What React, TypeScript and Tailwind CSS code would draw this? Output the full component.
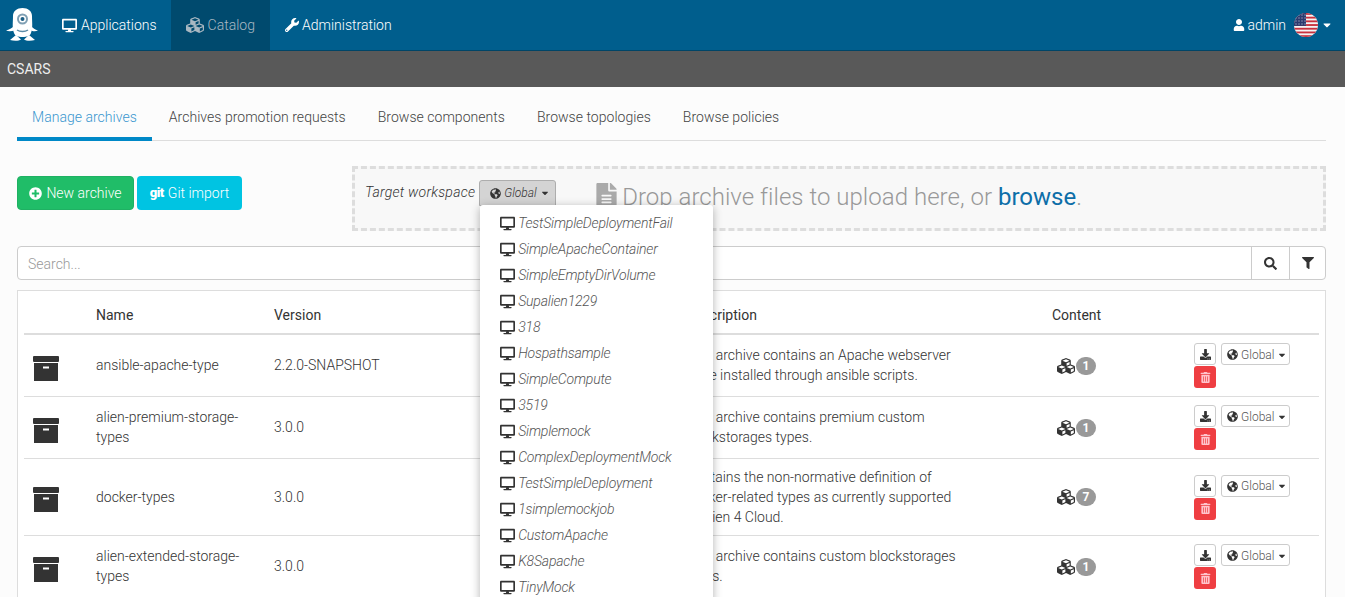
import { FaCaretDown, FaCubes, FaDesktop, FaDownload, FaFileAlt, FaFilter, FaGlobeAmericas, FaPlusCircle, FaSearch, FaTrashAlt, FaUser, FaWrench } from 'react-icons/fa';

const WORKSPACES = [
  'TestSimpleDeploymentFail',
  'SimpleApacheContainer',
  'SimpleEmptyDirVolume',
  'Supalien1229',
  '318',
  'Hospathsample',
  'SimpleCompute',
  '3519',
  'Simplemock',
  'ComplexDeploymentMock',
  'TestSimpleDeployment',
  '1simplemockjob',
  'CustomApache',
  'K8Sapache',
  'TinyMock',
];

const ARCHIVES = [
  {
    name: 'ansible-apache-type',
    version: '2.2.0-SNAPSHOT',
    description: ['This archive contains an Apache webserver', 'to be installed through ansible scripts.'],
    count: 1,
  },
  {
    name: 'alien-premium-storage-types',
    version: '3.0.0',
    description: ['This archive contains premium custom', 'blockstorages types.'],
    count: 1,
  },
  {
    name: 'docker-types',
    version: '3.0.0',
    description: ['Contains the non-normative definition of', 'docker-related types as currently supported', 'in Alien 4 Cloud.'],
    count: 7,
  },
  {
    name: 'alien-extended-storage-types',
    version: '3.0.0',
    description: ['This archive contains custom blockstorages', 'types.'],
    count: 1,
  },
];

const TABS = ['Manage archives', 'Archives promotion requests', 'Browse components', 'Browse topologies', 'Browse policies'];

function Logo() {
  return (
    <svg width="34" height="40" viewBox="0 0 34 40" className="block">
      <g fill="#fff">
        <path d="M8 11c0-5 4-8 9.500-8S27 6 27 11c0 6 1 12-1 17-1 3-4 4-8.500 4S10 31 9 28c-2-5-1-11-1-17z" />
        <path d="M9 21c-2 2-5 4-8 4.500 3 1.200 6 .8 9-.5zM26 21c2 2 4 4 7 4.500-3 1.200-5 .8-8-.5z" />
        <path d="M11 30l-6 5c4 1.200 9 1 11-.5zM24 30l6 5c-4 1.200-9 1-11-.5z" />
      </g>
      <circle cx="17.500" cy="14" r="5.500" fill="#7f9fb3" />
      <circle cx="17.500" cy="14" r="3.500" fill="#fff" />
      <circle cx="17.500" cy="14" r="2" fill="#1d5f86" />
      <path d="M12 25c3 2 8 2 11 0" stroke="#5a8aa6" strokeWidth="1.500" fill="none" />
    </svg>
  );
}

function Flag() {
  const stripes = [0, 2, 4, 6, 8, 10, 12];
  return (
    <svg width="24" height="24" viewBox="0 0 24 24" className="block">
      <defs>
        <clipPath id="flag-circle">
          <circle cx="12" cy="12" r="12" />
        </clipPath>
      </defs>
      <g clipPath="url(#flag-circle)">
        <rect width="24" height="24" fill="#f4f4f4" />
        {stripes.map((s) => (
          <rect key={s} y={s * 1.85} width="24" height="1.850" fill="#c8313e" />
        ))}
        <rect width="12" height="12.900" fill="#2b3a6e" />
        {[2, 5, 8, 11].map((y) =>
          [2, 5, 8, 11].map((x) => <rect key={`${x}-${y}`} x={x - 0.5} y={y - 0.5} width="1" height="1" fill="#cfd3e2" />),
        )}
      </g>
    </svg>
  );
}

function ArchiveIcon() {
  return (
    <svg width="26" height="25" viewBox="0 0 26 25" className="block">
      <rect x="0" y="0" width="26" height="6" rx="1" fill="#333" />
      <rect x="1" y="7" width="24" height="18" fill="#333" />
      <rect x="10" y="10.500" width="6" height="2" fill="#fff" />
    </svg>
  );
}

function NavItem({ icon, label, active, className = '' }: { icon: React.ReactNode; label: string; active?: boolean; className?: string }) {
  return (
    <a className={`flex h-[50px] items-center gap-[4px] px-[15px] ${active ? 'bg-[#004a6e] text-[#a9b8c2]' : 'text-white'} ${className}`}>
      {icon}
      {label}
    </a>
  );
}

export default function App() {
  return (
    <div className="h-screen overflow-hidden bg-[#fcfcfc] font-['Roboto',sans-serif] text-[14px] leading-[20px] text-[#333]">
      <header className="flex h-[51px] items-center border-b border-[#004567] bg-[#005e8d] pr-[12px] font-light">
        <div className="ml-[5px] mr-[2px] w-[40px]">
          <Logo />
        </div>
        <NavItem className="mr-[-1px]" icon={<FaDesktop className="text-[15px]" />} label="Applications" />
        <NavItem active icon={<FaCubes className="text-[18px]" />} label="Catalog" />
        <NavItem icon={<FaWrench className="mr-[-1px] text-[14px]" />} label="Administration" />
        <div className="ml-auto flex items-center text-white">
          <FaUser className="mr-[2px] text-[12px]" />
          <span className="mr-[8px]">admin</span>
          <Flag />
          <FaCaretDown className="ml-[3px] text-[12px]" />
        </div>
      </header>

      <div className="flex h-[36px] items-center bg-[#595959] pl-[7px] text-[#eee]">CSARS</div>

      <main className="pl-[17px] pr-[19px] pt-[10px]">
        <nav className="flex h-[44px] gap-[2px] border-b border-[#ddd] font-light tracking-[0.03px]">
          {TABS.map((tab, i) => (
            <a
              key={tab}
              className={`h-[44px] px-[15px] pt-[10px] ${i === 0 ? 'border-b-4 border-[#0088c7] text-[#3a97cf]' : 'text-[#444]'}`}
            >
              {tab}
            </a>
          ))}
        </nav>

        <section className="mt-[25px] flex items-start">
          <div className="flex w-[335px] gap-[3px] pt-[10px]">
            <button className="flex h-[34px] w-[117px] items-center justify-center gap-[4px] rounded-[4px] border border-[#1fb163] bg-[#20bd68] font-light text-white">
              <FaPlusCircle className="text-[13px]" />
              New archive
            </button>
            <button className="flex h-[34px] w-[105px] items-center justify-center gap-[4px] rounded-[4px] bg-[#00c4e2] font-light text-white">
              <span className="text-[13px] font-black tracking-[-0.5px]">git</span>
              Git import
            </button>
          </div>
          <div className="flex h-[65px] flex-1 items-start border-[3px] border-dashed border-[#ddd] bg-[#f8f8f8] pl-[10px] pt-[11px]">
            <span className="mr-[4px] mt-[2px] font-light italic tracking-[0.25px]">Target workspace</span>
            <div className="relative">
              <button className="flex h-[26px] w-[77px] items-center gap-[3px] rounded-t-[3px] border border-[#adadad] bg-[#d4d4d4] pl-[10px] text-[12px] font-light italic text-[#333]">
                <FaGlobeAmericas className="text-[11px] text-[#333]" />
                Global
                <FaCaretDown className="text-[10px] text-[#333]" />
              </button>
              <ul className="absolute left-[1px] top-[25px] z-10 w-[233px] rounded-t-[3px] bg-white py-[5px] shadow-[0_2px_10px_rgba(0,0,0,0.3)]">
                {WORKSPACES.map((w) => (
                  <li key={w} className="flex h-[26px] items-center pl-[20px] font-light italic tracking-[-0.18px] text-[#555]">
                    <FaDesktop className="mr-[3px] text-[15px] text-[#333]" />
                    {w}
                  </li>
                ))}
              </ul>
            </div>
            <FaFileAlt className="ml-[37px] mt-[3px] text-[27px] text-[#aaa]" />
            <span className="ml-[2px] text-[24px] font-light leading-[34px] tracking-[0.03px] text-[#999]">
              Drop archive files to upload here, or <span className="font-normal text-[#0d6ea8]">browse</span>.
            </span>
          </div>
        </section>

        <div className="mt-[15px] flex h-[34px] rounded-[4px] border border-[#ccc] bg-white">
          <div className="flex-1 pl-[10px] pt-[7px] font-light text-[#999]">Search...</div>
          <div className="flex w-[38px] items-center justify-center border-l border-[#ccc]">
            <FaSearch className="text-[13px] text-[#333]" />
          </div>
          <div className="flex w-[36px] items-center justify-center border-l border-[#ccc]">
            <FaFilter className="text-[12px] text-[#333]" />
          </div>
        </div>

        <div className="mt-[10px] border border-[#ddd] bg-white px-[6px] pt-[6px]">
          <table className="w-[1295px] table-fixed border-collapse">
            <colgroup>
              <col className="w-[64px]" />
              <col className="w-[178px]" />
              <col className="w-[412px]" />
              <col className="w-[366px]" />
              <col className="w-[142px]" />
              <col className="w-[133px]" />
            </colgroup>
            <thead>
              <tr className="border-b-2 border-[#ddd] text-left">
                <th className="p-[8px]" />
                <th className="p-[8px] font-normal">Name</th>
                <th className="p-[8px] font-normal">Version</th>
                <th className="p-[8px] font-normal">Description</th>
                <th className="p-[8px] font-normal">Content</th>
                <th className="p-[8px]" />
              </tr>
            </thead>
            <tbody className="font-light text-[#333]">
              {ARCHIVES.map((a) => {
                const compact = a.description.length < 3 ? 'pb-[10px]' : '';
                return (
                  <tr key={a.name} className="border-b border-[#ddd]">
                    <td className="p-[8px] pl-[9px] pt-[13px]">
                      <ArchiveIcon />
                    </td>
                    <td className={`p-[8px] ${compact}`}>{a.name}</td>
                    <td className={`p-[8px] ${compact}`}>{a.version}</td>
                    <td className={`p-[8px] ${compact}`}>
                      {a.description.map((line) => (
                        <div key={line}>{line}</div>
                      ))}
                    </td>
                    <td className="p-[8px]">
                      <div className="flex items-center pl-[5px]">
                        <FaCubes className="text-[18px] text-[#333]" />
                        <span className="ml-[1px] flex h-[18px] w-[20px] items-center justify-center rounded-full bg-[#999] text-[12px] font-bold text-white">
                          {a.count}
                        </span>
                      </div>
                    </td>
                    <td className="p-[8px]">
                      <div className="flex flex-wrap gap-x-[5px] gap-y-[1px]">
                        <button className="flex h-[22px] w-[22px] items-center justify-center rounded-[3px] border border-[#ccc] bg-white">
                          <FaDownload className="text-[11px] text-[#333]" />
                        </button>
                        <button className="flex h-[22px] w-[69px] items-center gap-[3px] rounded-[3px] border border-[#ccc] bg-white pl-[5px] pt-[1px] text-[12px] text-[#555]">
                          <FaGlobeAmericas className="text-[11px] text-[#333]" />
                          Global
                          <FaCaretDown className="text-[10px] text-[#333]" />
                        </button>
                        <button className="flex h-[22px] w-[22px] items-center justify-center rounded-[3px] bg-[#ef3e42]">
                          <FaTrashAlt className="text-[11px] text-[#ffc4cc]" />
                        </button>
                      </div>
                    </td>
                  </tr>
                );
              })}
            </tbody>
          </table>
        </div>
      </main>
    </div>
  );
}
